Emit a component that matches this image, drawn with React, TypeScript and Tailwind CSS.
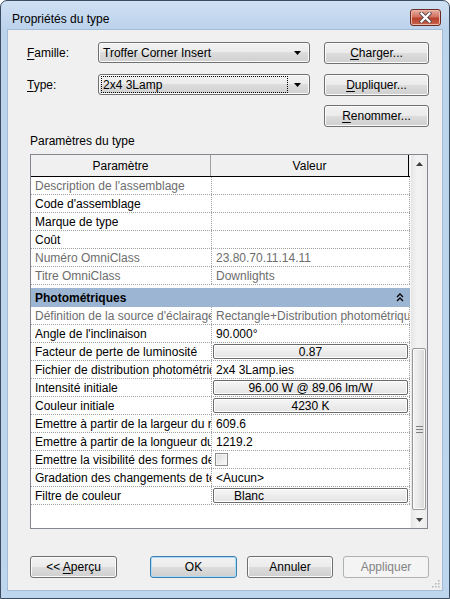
import React from 'react';

type Row = {
  label: string;
  value?: string;
  dim?: boolean;
  kind?: 'text' | 'button' | 'check' | 'left';
};

const IDENTITY: Row[] = [
  { label: "Description de l'assemblage", dim: true },
  { label: "Code d'assemblage" },
  { label: 'Marque de type' },
  { label: 'Coût' },
  { label: 'Numéro OmniClass', value: '23.80.70.11.14.11', dim: true },
  { label: 'Titre OmniClass', value: 'Downlights', dim: true },
];

const PHOTO: Row[] = [
  { label: "Définition de la source d'éclairage", value: 'Rectangle+Distribution photométrique', dim: true },
  { label: "Angle de l'inclinaison", value: '90.000°' },
  { label: 'Facteur de perte de luminosité', value: '0.87', kind: 'button' },
  { label: 'Fichier de distribution photométrique', value: '2x4 3Lamp.ies' },
  { label: 'Intensité initiale', value: '96.00 W @ 89.06 lm/W', kind: 'button' },
  { label: 'Couleur initiale', value: '4230 K', kind: 'button' },
  { label: 'Emettre à partir de la largeur du rectangle', value: '609.6' },
  { label: 'Emettre à partir de la longueur du rectangle', value: '1219.2' },
  { label: 'Emettre la visibilité des formes de lumière', kind: 'check' },
  { label: 'Gradation des changements de température de couleur', value: '<Aucun>' },
  { label: 'Filtre de couleur', value: 'Blanc', kind: 'left' },
];

const BTN_BG =
  'bg-[linear-gradient(to_bottom,#f2f2f2_0%,#ebebeb_50%,#dddddd_50%,#cfcfcf_100%)]';

function Btn({ children, className = '', variant }: {
  children: React.ReactNode; className?: string; variant?: 'default' | 'disabled';
}) {
  const look =
    variant === 'default'
      ? `border-[#3c7fb1] ${BTN_BG} shadow-[inset_0_0_0_1px_#a8dcf8] text-black`
      : variant === 'disabled'
      ? 'border-[#adb2b5] bg-[#f4f4f4] text-[#838383]'
      : `border-[#707070] ${BTN_BG} shadow-[inset_0_0_0_1px_#fbfbfb] text-black`;
  return (
    <div className={`shrink-0 h-[22px] rounded-[3px] border flex items-center justify-center text-[12px] ${look} ${className}`}>
      {children}
    </div>
  );
}

function Combo({ text, focused }: { text: string; focused?: boolean }) {
  return (
    <div className={`shrink-0 w-[212px] h-[21px] rounded-[3px] border border-[#707070] ${BTN_BG} shadow-[inset_0_0_0_1px_#fbfbfb] flex items-center pl-[2px] pr-[4px]`}>
      <div className={`flex-1 h-[17px] flex items-center pl-[1px] ${focused ? 'outline outline-1 outline-dotted outline-black -outline-offset-1' : ''}`}>
        <span className="pl-[1px]">{text}</span>
      </div>
      <svg width="13" height="8" viewBox="0 0 13 8" className="ml-[4px]">
        <path d="M2 2h7l-3.5 4z" fill="#000" />
      </svg>
    </div>
  );
}

function ValueCell({ row }: { row: Row }) {
  if (row.kind === 'button' || row.kind === 'left') {
    return (
      <div className="h-full flex items-center px-[1px]">
        <div className={`w-full h-[15px] rounded-[2px] border border-[#6b6b6b] bg-[linear-gradient(to_bottom,#f6f6f6,#e4e4e4)] shadow-[inset_0_0_0_1px_#fff] flex items-center text-[12px] leading-none ${row.kind === 'left' ? 'pl-[20px]' : 'justify-center'}`}>
          {row.value}
        </div>
      </div>
    );
  }
  if (row.kind === 'check') {
    return (
      <div className="h-full flex items-center pl-[3px]">
        <div className="w-[13px] h-[13px] border border-[#8e8f8f] bg-[linear-gradient(135deg,#dcdcdc,#fbfbfb)] shadow-[inset_0_0_0_1px_#f4f4f4]" />
      </div>
    );
  }
  return (
    <div className={`h-full flex items-center pl-[4px] whitespace-nowrap overflow-hidden ${row.dim ? 'text-[#6d6d6d]' : 'text-black'}`}>
      {row.value}
    </div>
  );
}

function GridRow({ row }: { row: Row }) {
  return (
    <div className="flex h-[18px] border-b border-dotted border-[#a0a0a0]">
      <div className={`w-[180px] shrink-0 pl-[4px] flex items-center whitespace-nowrap overflow-hidden ${row.dim ? 'text-[#6d6d6d]' : 'text-black'}`}>
        {row.label}
      </div>
      <div className="w-[199px] shrink-0 border-l border-r border-dotted border-[#a0a0a0] overflow-hidden">
        <ValueCell row={row} />
      </div>
    </div>
  );
}

function ScrollBar() {
  return (
    <div className="w-[17px] shrink-0 flex flex-col bg-[linear-gradient(to_right,#e6e6e6,#f3f3f3_40%,#ededed)] border-l border-[#f7f7f7]">
      <div className="h-[17px] flex items-center justify-center">
        <svg width="7" height="4" viewBox="0 0 7 4"><path d="M0 4h7L3.5 0z" fill="#3f3f3f" /></svg>
      </div>
      <div className="h-[176px]" />
      <div className="h-[162px] mx-[1px] rounded-[2px] border border-[#989898] bg-[linear-gradient(to_right,#f3f3f3,#e8e8e8_50%,#d6d6d6)] shadow-[inset_0_0_0_1px_#fafafa] flex flex-col items-center justify-center gap-[2px]">
        <div className="w-[7px] h-px bg-[#7f7f7f]" />
        <div className="w-[7px] h-px bg-[#7f7f7f]" />
        <div className="w-[7px] h-px bg-[#7f7f7f]" />
      </div>
      <div className="flex-1" />
      <div className="h-[17px] flex items-center justify-center">
        <svg width="7" height="4" viewBox="0 0 7 4"><path d="M0 0h7L3.5 4z" fill="#3f3f3f" /></svg>
      </div>
    </div>
  );
}

function PropertyGrid() {
  return (
    <div className="ml-[3px] w-[398px] h-[375px] border border-[#828790] flex bg-white">
      <div className="w-[379px] shrink-0 flex flex-col">
        <div className="flex h-[22px] bg-[#f0f0f0] border-b border-black shrink-0">
          <div className="w-[180px] shrink-0 flex items-center justify-center border-r border-[#a0a0a0]">Paramètre</div>
          <div className="w-[198px] shrink-0 flex items-center justify-center border-r border-black">Valeur</div>
        </div>
        {IDENTITY.map(r => <GridRow key={r.label} row={r} />)}
        <div className="mt-[3px] h-[19px] bg-[#9bb5d3] flex items-center justify-between pl-[4px] pr-[6px] font-bold">
          <span>Photométriques</span>
          <svg width="8" height="9" viewBox="0 0 8 9">
            <path d="M1 4l3-3 3 3M1 8l3-3 3 3" fill="none" stroke="#000" strokeWidth="1.3" />
          </svg>
        </div>
        {PHOTO.map(r => <GridRow key={r.label} row={r} />)}
      </div>
      <ScrollBar />
    </div>
  );
}

export default function App() {
  return (
    <div className="w-[450px] h-[599px] font-['Liberation_Sans',Arial,sans-serif] text-[12px] text-black">
      <div className="w-full h-full border border-[#3b4c61] rounded-t-[7px] bg-[linear-gradient(to_bottom,#cfe0f3,#bcd3ec_28px,#bed5ee)] flex flex-col">
        {/* title bar */}
        <div className="h-[29px] flex items-start justify-between pl-[11px] pr-[8px]">
          <span className="mt-[9px] text-[12px] text-black">Propriétés du type</span>
          <div className="mt-[8px] w-[31px] h-[17px] rounded-[3px] border border-[#6b2a22] bg-[linear-gradient(to_bottom,#e8b0a2,#d27260_45%,#b8412d_55%,#c9634c)] shadow-[inset_0_0_0_1px_#eab9ac] flex items-center justify-center">
            <svg width="13" height="11" viewBox="0 0 13 11">
              <path d="M2.5 1.5l8 8M10.5 1.5l-8 8" stroke="#5a4a4a" strokeWidth="4" strokeLinecap="square" />
              <path d="M2.5 1.5l8 8M10.5 1.5l-8 8" stroke="#fff" strokeWidth="2.2" strokeLinecap="square" />
            </svg>
          </div>
        </div>

        {/* client area */}
        <div className="relative mx-[7px] h-[560px] bg-[#f0f0f0] shadow-[0_0_0_1px_#a5bcd6] pl-[19px] flex flex-col">
          <div className="mt-[12px] flex items-center h-[21px]">
            <div className="w-[71px] shrink-0"><u className="underline-offset-2">F</u>amille:</div>
            <Combo text="Troffer Corner Insert" />
            <Btn className="ml-[14px] w-[105px] h-[21px]"><span><u className="underline-offset-2">C</u>harger...</span></Btn>
          </div>
          <div className="mt-[11px] flex items-center h-[21px]">
            <div className="w-[71px] shrink-0"><u className="underline-offset-2">T</u>ype:</div>
            <Combo text="2x4 3Lamp" focused />
            <Btn className="ml-[14px] w-[105px] h-[21px]"><span><u className="underline-offset-2">D</u>upliquer...</span></Btn>
          </div>
          <div className="mt-[10px] flex h-[21px]">
            <Btn className="ml-[297px] w-[105px] h-[21px]"><span><u className="underline-offset-2">R</u>enommer...</span></Btn>
          </div>
          <div className="mt-[8px] ml-[3px] h-[15px] leading-[15px]">Paramètres du type</div>
          <div className="mt-[5px]">
            <PropertyGrid />
          </div>
          <div className="mt-[27px] ml-[3px] flex items-center">
            <Btn className="w-[87px]"><span>&lt;&lt; <u className="underline-offset-2">A</u>perçu</span></Btn>
            <div className="ml-[33px] flex gap-[10px] shrink-0">
              <Btn className="w-[87px]" variant="default">OK</Btn>
              <Btn className="w-[86px]">Annuler</Btn>
              <Btn className="w-[86px]" variant="disabled">Appliquer</Btn>
            </div>
          </div>
          {/* size grip */}
          <svg width="10" height="10" viewBox="0 0 10 10" className="absolute right-[2px] bottom-[2px]">
            {[[8, 0], [8, 3], [8, 6], [5, 3], [5, 6], [2, 6]].map(([x, y]) => (
              <rect key={`${x}-${y}`} x={x} y={y + 2} width="1.5" height="1.5" fill="#b3b3b3" />
            ))}
          </svg>
        </div>
      </div>
    </div>
  );
}
